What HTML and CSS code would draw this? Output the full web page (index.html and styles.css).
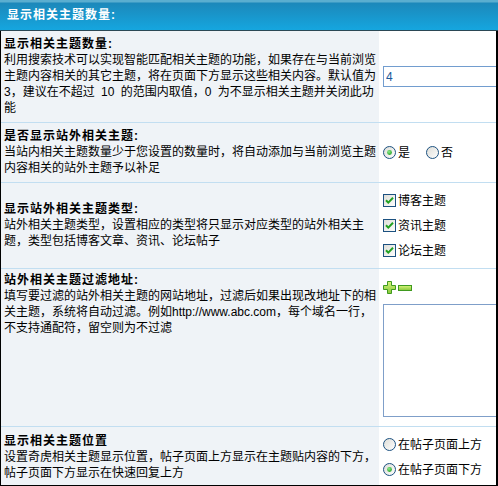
FILE: index.html
```html
<!DOCTYPE html>
<html lang="zh-CN">
  <head>
    <meta charset="UTF-8" />
    <title>相关主题设置</title>
    <link rel="stylesheet" href="styles.css">
  </head>
  <body>
    <!-- shared shapes for the form controls -->
    <svg class="defs" width="0" height="0" aria-hidden="true">
      <defs>
        <linearGradient id="ctlFill" x1="0" y1="0" x2="1" y2="1">
          <stop offset="0" stop-color="#dcdcd6" />
          <stop offset="1" stop-color="#ffffff" />
        </linearGradient>
        <radialGradient id="dotFill" cx="0.4" cy="0.35" r="0.7">
          <stop offset="0" stop-color="#8ef08e" />
          <stop offset="1" stop-color="#1f9e1f" />
        </radialGradient>
        <linearGradient id="addFill" x1="0" y1="0" x2="0" y2="1">
          <stop offset="0" stop-color="#d8f47a" />
          <stop offset="1" stop-color="#86c83a" />
        </linearGradient>
        <symbol id="radio-off" viewBox="0 0 13 13">
          <circle cx="6.5" cy="6.5" r="6" fill="url(#ctlFill)" stroke="#1d5281" />
        </symbol>
        <symbol id="radio-on" viewBox="0 0 13 13">
          <circle cx="6.5" cy="6.5" r="6" fill="url(#ctlFill)" stroke="#1d5281" />
          <circle cx="6.5" cy="6.5" r="2.4" fill="url(#dotFill)" />
        </symbol>
        <symbol id="check-on" viewBox="0 0 13 13">
          <rect x="0.5" y="0.5" width="12" height="12" fill="url(#ctlFill)" stroke="#1c5180" />
          <path d="M3 6.2 L5.3 8.6 L10 3.8" fill="none" stroke="#21a121" stroke-width="2" />
        </symbol>
      </defs>
    </svg>

    <div class="panel">
      <div class="panel-head">显示相关主题数量:</div>
      <div class="panel-body">

        <div class="opt-row">
          <div class="opt-label">
            <b>显示相关主题数量:</b>
            <span>利用搜索技术可以实现智能匹配相关主题的功能，如果存在与当前浏览主题内容相关的其它主题，将在页面下方显示这些相关内容。默认值为 3，建议在不超过 10 的范围内取值，0 为不显示相关主题并关闭此功能</span>
          </div>
          <div class="opt-field">
            <input class="txt" type="text" value="4" />
          </div>
        </div>

        <div class="opt-row">
          <div class="opt-label">
            <b>是否显示站外相关主题:</b>
            <span>当站内相关主题数量少于您设置的数量时，将自动添加与当前浏览主题内容相关的站外主题予以补足</span>
          </div>
          <div class="opt-field">
            <div class="choice-line">
              <label class="choice"><svg class="ctl"><use href="#radio-on" /></svg>是</label>
              <label class="choice"><svg class="ctl"><use href="#radio-off" /></svg>否</label>
            </div>
          </div>
        </div>

        <div class="opt-row">
          <div class="opt-label">
            <b>显示站外相关主题类型:</b>
            <span>站外相关主题类型，设置相应的类型将只显示对应类型的站外相关主题，类型包括博客文章、资讯、论坛帖子</span>
          </div>
          <div class="opt-field">
            <label class="choice row"><svg class="ctl"><use href="#check-on" /></svg>博客主题</label>
            <label class="choice row"><svg class="ctl"><use href="#check-on" /></svg>资讯主题</label>
            <label class="choice row"><svg class="ctl"><use href="#check-on" /></svg>论坛主题</label>
          </div>
        </div>

        <div class="opt-row top">
          <div class="opt-label">
            <b>站外相关主题过滤地址:</b>
            <span>填写要过滤的站外相关主题的网站地址，过滤后如果出现改地址下的相关主题，系统将自动过滤。例如http://www.abc.com，每个域名一行，不支持通配符，留空则为不过滤</span>
          </div>
          <div class="opt-field filter">
            <div class="tools">
              <svg class="tool" width="13" height="13" viewBox="0 0 13 13">
                <path d="M4.5 0.5 H8.5 V4.5 H12.5 V8.5 H8.5 V12.5 H4.5 V8.5 H0.5 V4.5 H4.5 Z" fill="url(#addFill)" stroke="#3f9a1f" />
              </svg>
              <svg class="tool" width="14" height="6" viewBox="0 0 14 6">
                <rect x="0.5" y="0.5" width="13" height="5" fill="url(#addFill)" stroke="#3f9a1f" />
              </svg>
            </div>
            <textarea class="area"></textarea>
          </div>
        </div>

        <div class="opt-row">
          <div class="opt-label">
            <b>显示相关主题位置</b>
            <span>设置奇虎相关主题显示位置，帖子页面上方显示在主题贴内容的下方，帖子页面下方显示在快速回复上方</span>
          </div>
          <div class="opt-field">
            <label class="choice row"><svg class="ctl"><use href="#radio-off" /></svg>在帖子页面上方</label>
            <label class="choice row"><svg class="ctl"><use href="#radio-on" /></svg>在帖子页面下方</label>
          </div>
        </div>

      </div>
    </div>
  </body>
</html>
```

FILE: styles.css
```css
body {
  margin: 0;
  font: 12px/16px "Liberation Sans", "Noto Sans CJK SC", sans-serif;
  word-spacing: 3px;
  color: #000;
  background: #fff;
}

.defs {
  position: absolute;
  width: 0;
  height: 0;
}

.panel {
  width: 498px;
  height: 486px;
  overflow: hidden;
}

.panel-head {
  height: 30px;
  line-height: 30px;
  padding-left: 7px;
  border-bottom: 1px solid #2b4855;
  background: linear-gradient(#5aaed0 0, #5aaed0 2px, #1c88ba 3px, #15a6df 100%);
  color: #fff;
  font-weight: bold;
  letter-spacing: 1px;
}

.panel-body {
  height: 455px;
  box-sizing: border-box;
  overflow: hidden;
  border-left: 1px solid #000;
  border-right: 2px solid #000;
  border-bottom: 1px solid #000;
}

.opt-row {
  display: flex;
  border-bottom: 1px solid #c2def1;
}

/* 31 full-width glyphs per line */
.opt-label {
  width: 378px;
  flex: none;
  box-sizing: border-box;
  padding: 5px 3px 6px 3px;
  background: #eff3f7;
  display: flex;
  flex-direction: column;
  justify-content: center;
}

.opt-label b {
  letter-spacing: 1px;
}

.opt-row.top .opt-label {
  justify-content: flex-start;
  padding-top: 3px;
}

.opt-field {
  flex: 1;
  min-width: 0;
  overflow: hidden;
  padding: 5px 0 5px 4px;
  display: flex;
  flex-direction: column;
  justify-content: center;
}

.txt {
  width: 200px;
  height: 21px;
  box-sizing: border-box;
  margin: 0;
  padding: 0 2px;
  border: 1px solid #729dcf;
  font: 12px "Liberation Sans", "Noto Sans CJK SC", sans-serif;
  color: #19589a;
}

.choice-line {
  display: flex;
  gap: 16px;
}

.choice {
  display: flex;
  align-items: center;
}

.choice.row {
  height: 25px;
}

.ctl {
  width: 13px;
  height: 13px;
  margin-right: 2px;
  flex: none;
}

.filter {
  padding: 12px 0 9px 4px;
}

.tools {
  display: flex;
  align-items: center;
  gap: 2px;
  margin-bottom: 10px;
}

.area {
  width: 200px;
  height: 113px;
  box-sizing: border-box;
  margin: 0;
  border: 1px solid #7f9fc9;
  resize: none;
  display: block;
}
```
